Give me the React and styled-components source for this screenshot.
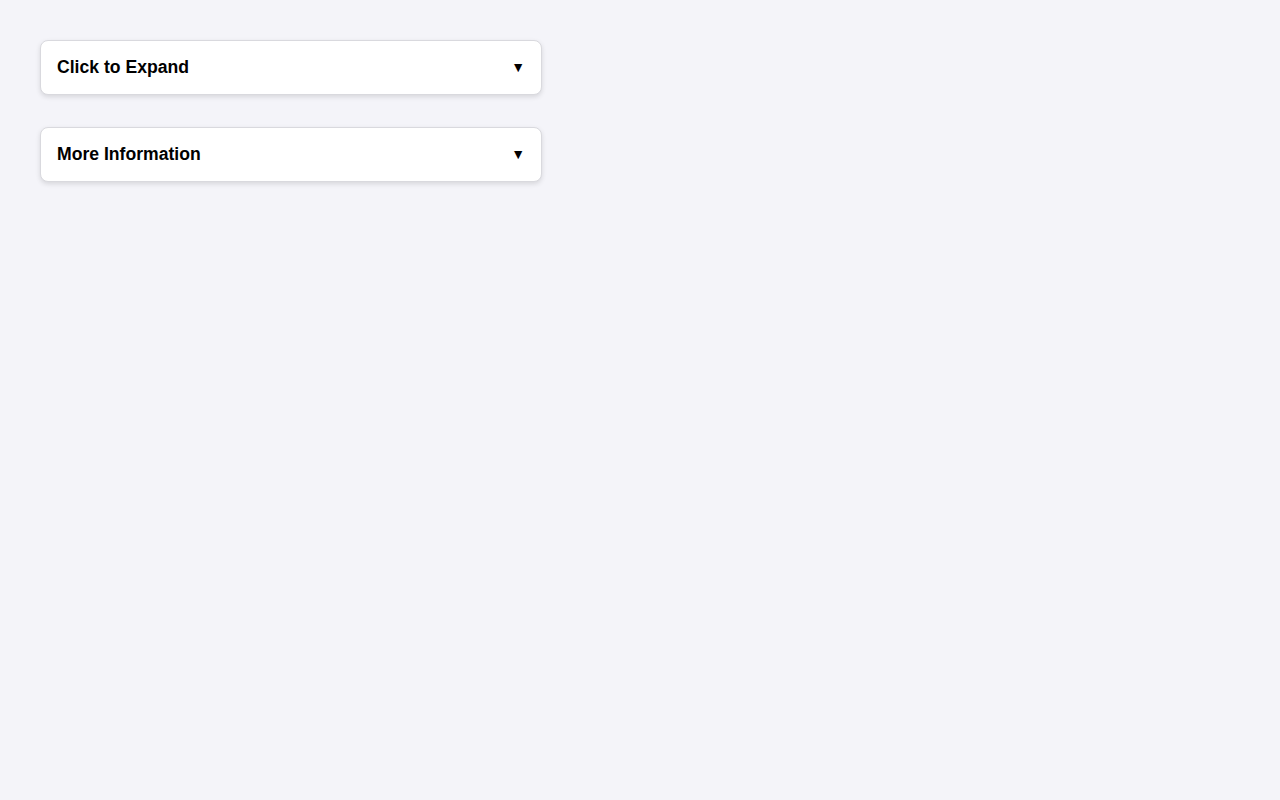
import React from 'react';
import styled, { createGlobalStyle } from 'styled-components';

const GlobalStyle = createGlobalStyle`
    html, body {
        margin: 0;
        padding: 0;
        background-color: #f4f4f9;
        font-family: "Liberation Sans", Arial, sans-serif;
    }
`

/** styled components */
const Page = styled.div`
    min-height: 800px;
    padding: 40px;
    box-sizing: border-box;
    display: flex;
    flex-direction: column;
    gap: 32px;
`
const Panel = styled.div`
    width: 500px;
    background-color: #ffffff;
    border: 1px solid #d9d9de;
    border-radius: 8px;
    box-shadow: 0 2px 5px rgba(0, 0, 0, 0.12);
`
const Header = styled.div`
    display: flex;
    align-items: center;
    justify-content: space-between;
    padding: 16px;
    cursor: pointer;
`
const Title = styled.span`
    font-size: 17.6px;
    font-weight: 700;
    line-height: 21px;
    color: #000;
`
const Arrow = styled.span`
    font-size: 14px;
    line-height: 21px;
    color: #000;
`

const sections = ['Click to Expand', 'More Information'];

const App = () => {
    return (
        <>
            <GlobalStyle />
            <Page>
                {sections.map((title) => (
                    <Panel key={title}>
                        <Header>
                            <Title>{title}</Title>
                            <Arrow>▼</Arrow>
                        </Header>
                    </Panel>
                ))}
            </Page>
        </>
    )
}

export default App;
